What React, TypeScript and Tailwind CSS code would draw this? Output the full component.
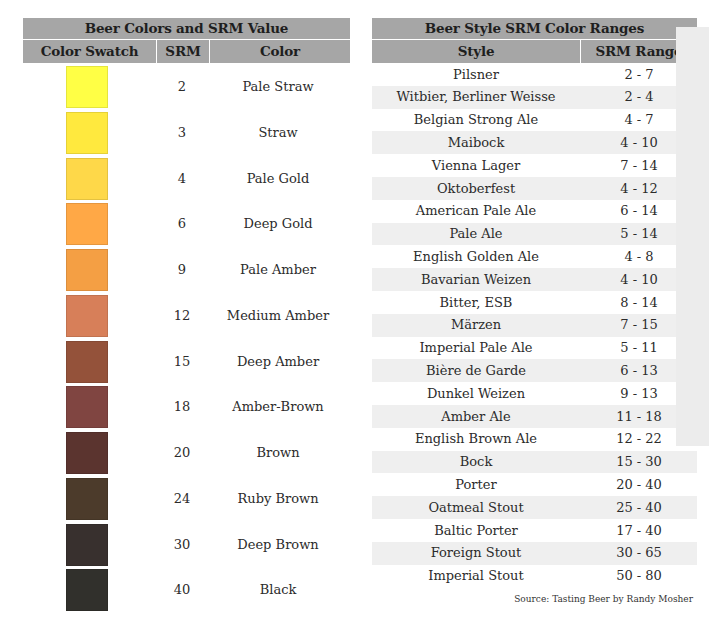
import React from "react";

const swatches: [string, string, string][] = [
  ["#FFFF45", "2", "Pale Straw"],
  ["#FFE93E", "3", "Straw"],
  ["#FED849", "4", "Pale Gold"],
  ["#FFA846", "6", "Deep Gold"],
  ["#F49F44", "9", "Pale Amber"],
  ["#D77F59", "12", "Medium Amber"],
  ["#94523A", "15", "Deep Amber"],
  ["#804541", "18", "Amber-Brown"],
  ["#5B342F", "20", "Brown"],
  ["#4C3B2B", "24", "Ruby Brown"],
  ["#38302E", "30", "Deep Brown"],
  ["#31302C", "40", "Black"],
];

const styles: [string, string][] = [
  ["Pilsner", "2 - 7"],
  ["Witbier, Berliner Weisse", "2 - 4"],
  ["Belgian Strong Ale", "4 - 7"],
  ["Maibock", "4 - 10"],
  ["Vienna Lager", "7 - 14"],
  ["Oktoberfest", "4 - 12"],
  ["American Pale Ale", "6 - 14"],
  ["Pale Ale", "5 - 14"],
  ["English Golden Ale", "4 - 8"],
  ["Bavarian Weizen", "4 - 10"],
  ["Bitter, ESB", "8 - 14"],
  ["Märzen", "7 - 15"],
  ["Imperial Pale Ale", "5 - 11"],
  ["Bière de Garde", "6 - 13"],
  ["Dunkel Weizen", "9 - 13"],
  ["Amber Ale", "11 - 18"],
  ["English Brown Ale", "12 - 22"],
  ["Bock", "15 - 30"],
  ["Porter", "20 - 40"],
  ["Oatmeal Stout", "25 - 40"],
  ["Baltic Porter", "17 - 40"],
  ["Foreign Stout", "30 - 65"],
  ["Imperial Stout", "50 - 80"],
];

export default function App() {
  return (
    <div
      className="relative w-[709px] h-[624px] bg-white text-[#2b2b2b] overflow-hidden"
      style={{ fontFamily: '"DejaVu Serif", "Liberation Serif", serif' }}
    >
      <div className="flex gap-[22px] pl-[23px] pt-[18px]">
        {/* Left table */}
        <div className="w-[327px]">
          <div className="h-[21px] bg-[#a6a6a6] flex items-center justify-center text-[13.5px] font-bold text-[#1e1e1e] tracking-[-0.2px]">
            Beer Colors and SRM Value
          </div>
          <div className="h-px bg-white" />
          <div className="h-[23px] flex text-[13.5px] font-bold text-[#1e1e1e] tracking-[-0.2px]">
            <div className="w-[133px] bg-[#a6a6a6] flex items-center justify-center">Color Swatch</div>
            <div className="w-px bg-white" />
            <div className="w-[52px] bg-[#a6a6a6] flex items-center justify-center">SRM</div>
            <div className="w-px bg-white" />
            <div className="flex-1 bg-[#a6a6a6] flex items-center justify-center">Color</div>
          </div>
          {swatches.map(([c, srm, name]) => (
            <div key={srm} className="h-[45.75px] flex text-[13px]">
              <div className="w-[133px] pl-[43px] pt-[3px]">
                <div className="w-[42px] h-[42px] border border-black/10" style={{ backgroundColor: c }} />
              </div>
              <div className="w-px" />
              <div className="w-[52px] flex items-center justify-center pt-[2px] pr-[2px]">{srm}</div>
              <div className="w-px" />
              <div className="flex-1 flex items-center justify-center pt-[2px] pr-[4px]">{name}</div>
            </div>
          ))}
        </div>

        {/* Right table */}
        <div className="w-[325px]">
          <div className="h-[21px] bg-[#a6a6a6] flex items-center justify-center text-[13.5px] font-bold text-[#1e1e1e] tracking-[-0.2px]">
            Beer Style SRM Color Ranges
          </div>
          <div className="h-px bg-white" />
          <div className="h-[23px] flex text-[13.5px] font-bold text-[#1e1e1e] tracking-[-0.2px]">
            <div className="w-[208px] bg-[#a6a6a6] flex items-center justify-center">Style</div>
            <div className="w-px bg-white" />
            <div className="flex-1 bg-[#a6a6a6] flex items-center justify-center whitespace-nowrap">SRM Range</div>
          </div>
          {styles.map(([s, r], i) => (
            <div
              key={s}
              className={`h-[22.8px] flex text-[13px] ${i % 2 === 1 ? "bg-[#efefef]" : "bg-white"}`}
            >
              <div className="w-[208px] flex items-center justify-center">{s}</div>
              <div className="w-px" />
              <div className="flex-1 flex items-center justify-center">{r}</div>
            </div>
          ))}
          <div className="flex justify-end pr-[4px] pt-[6px] text-[9px] text-[#333]">
            Source: Tasting Beer by Randy Mosher
          </div>
        </div>
      </div>

      {/* overlapping gray panel */}
      <div className="absolute left-[676px] top-[27px] w-[33px] h-[419px] bg-[#ececec]" />
    </div>
  );
}
